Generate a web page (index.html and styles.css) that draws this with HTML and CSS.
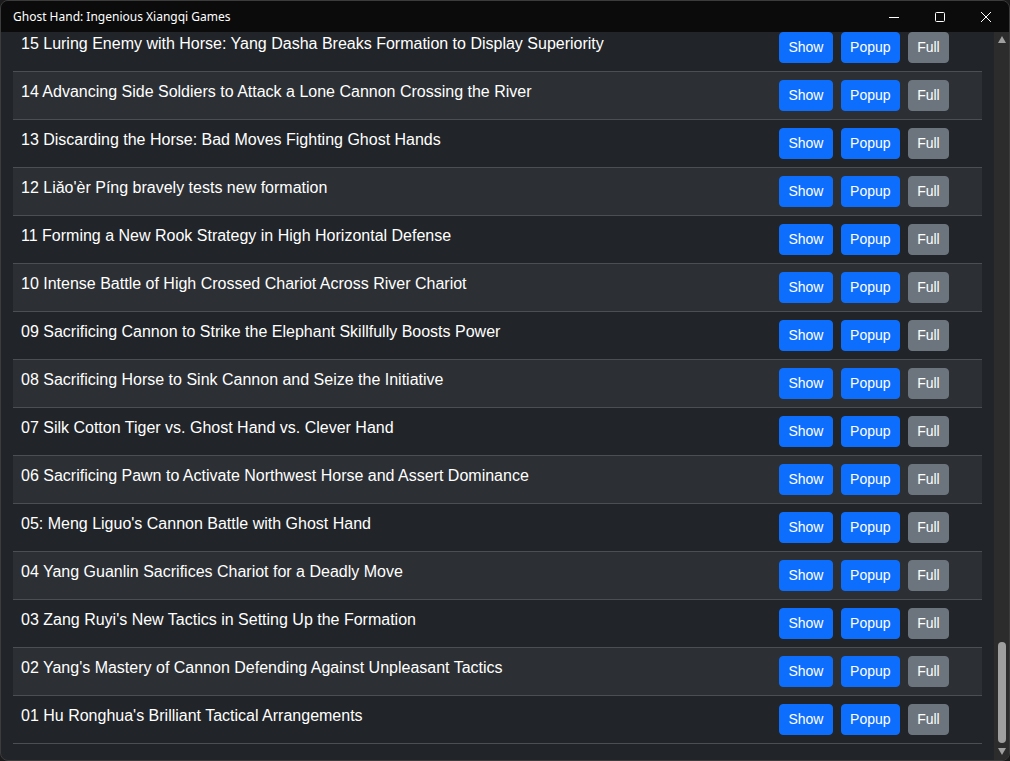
FILE: index.html
```html
<!DOCTYPE html>
<html>
<head>
<meta charset="utf-8">
<title>Ghost Hand: Ingenious Xiangqi Games</title>
<link rel="stylesheet" href="styles.css">
</head>
<body>
<div class="window">
  <div class="titlebar">
    <span class="title">Ghost Hand: Ingenious Xiangqi Games</span>
    <div class="controls">
      <div class="ctl"><svg width="12" height="12" viewBox="0 0 12 12"><path d="M1 6.5H11" stroke="#fff" stroke-width="1"/></svg></div>
      <div class="ctl"><svg width="12" height="12" viewBox="0 0 12 12"><rect x="1.5" y="1.5" width="9" height="9" rx="1" fill="none" stroke="#fff" stroke-width="1"/></svg></div>
      <div class="ctl"><svg width="12" height="12" viewBox="0 0 12 12"><path d="M1 1L11 11M11 1L1 11" stroke="#fff" stroke-width="1"/></svg></div>
    </div>
  </div>
  <div class="body">
    <div class="content">
      <div class="list">
        <div class="row"><div class="name">15 Luring Enemy with Horse: Yang Dasha Breaks Formation to Display Superiority</div><div class="actions"><button class="btn primary">Show</button><button class="btn primary">Popup</button><button class="btn secondary">Full</button></div></div>
        <div class="row striped"><div class="name">14 Advancing Side Soldiers to Attack a Lone Cannon Crossing the River</div><div class="actions"><button class="btn primary">Show</button><button class="btn primary">Popup</button><button class="btn secondary">Full</button></div></div>
        <div class="row"><div class="name">13 Discarding the Horse: Bad Moves Fighting Ghost Hands</div><div class="actions"><button class="btn primary">Show</button><button class="btn primary">Popup</button><button class="btn secondary">Full</button></div></div>
        <div class="row striped"><div class="name">12 Liǎo'èr Píng bravely tests new formation</div><div class="actions"><button class="btn primary">Show</button><button class="btn primary">Popup</button><button class="btn secondary">Full</button></div></div>
        <div class="row"><div class="name">11 Forming a New Rook Strategy in High Horizontal Defense</div><div class="actions"><button class="btn primary">Show</button><button class="btn primary">Popup</button><button class="btn secondary">Full</button></div></div>
        <div class="row striped"><div class="name">10 Intense Battle of High Crossed Chariot Across River Chariot</div><div class="actions"><button class="btn primary">Show</button><button class="btn primary">Popup</button><button class="btn secondary">Full</button></div></div>
        <div class="row"><div class="name">09 Sacrificing Cannon to Strike the Elephant Skillfully Boosts Power</div><div class="actions"><button class="btn primary">Show</button><button class="btn primary">Popup</button><button class="btn secondary">Full</button></div></div>
        <div class="row striped"><div class="name">08 Sacrificing Horse to Sink Cannon and Seize the Initiative</div><div class="actions"><button class="btn primary">Show</button><button class="btn primary">Popup</button><button class="btn secondary">Full</button></div></div>
        <div class="row"><div class="name">07 Silk Cotton Tiger vs. Ghost Hand vs. Clever Hand</div><div class="actions"><button class="btn primary">Show</button><button class="btn primary">Popup</button><button class="btn secondary">Full</button></div></div>
        <div class="row striped"><div class="name">06 Sacrificing Pawn to Activate Northwest Horse and Assert Dominance</div><div class="actions"><button class="btn primary">Show</button><button class="btn primary">Popup</button><button class="btn secondary">Full</button></div></div>
        <div class="row"><div class="name">05: Meng Liguo's Cannon Battle with Ghost Hand</div><div class="actions"><button class="btn primary">Show</button><button class="btn primary">Popup</button><button class="btn secondary">Full</button></div></div>
        <div class="row striped"><div class="name">04 Yang Guanlin Sacrifices Chariot for a Deadly Move</div><div class="actions"><button class="btn primary">Show</button><button class="btn primary">Popup</button><button class="btn secondary">Full</button></div></div>
        <div class="row"><div class="name">03 Zang Ruyi's New Tactics in Setting Up the Formation</div><div class="actions"><button class="btn primary">Show</button><button class="btn primary">Popup</button><button class="btn secondary">Full</button></div></div>
        <div class="row striped"><div class="name">02 Yang's Mastery of Cannon Defending Against Unpleasant Tactics</div><div class="actions"><button class="btn primary">Show</button><button class="btn primary">Popup</button><button class="btn secondary">Full</button></div></div>
        <div class="row"><div class="name">01 Hu Ronghua's Brilliant Tactical Arrangements</div><div class="actions"><button class="btn primary">Show</button><button class="btn primary">Popup</button><button class="btn secondary">Full</button></div></div>
      </div>
    </div>
    <div class="scrollbar">
      <div class="arrow up"></div>
      <div class="track"><div class="thumb"></div></div>
      <div class="arrow down"></div>
    </div>
  </div>
</div>
</body>
</html>
```

FILE: styles.css
```css
html, body {
  margin: 0;
  padding: 0;
  background: #1b1b1b;
}
body {
  width: 1010px;
  height: 761px;
  overflow: hidden;
}
.window {
  box-sizing: border-box;
  width: 1010px;
  height: 761px;
  border: 1px solid #3c3c3c;
  border-radius: 8px;
  overflow: hidden;
  background: #212529;
  display: flex;
  flex-direction: column;
}
.titlebar {
  height: 31px;
  flex: none;
  background: #0b0b0b;
  display: flex;
  align-items: center;
}
.title {
  flex: 1;
  padding-left: 12px;
  font-family: "Noto Sans", "Segoe UI", sans-serif;
  font-size: 12px;
  color: #ffffff;
  line-height: 16px;
}
.controls {
  display: flex;
  height: 100%;
}
.ctl {
  width: 46px;
  height: 100%;
  display: flex;
  align-items: center;
  justify-content: center;
}
.body {
  flex: 1;
  display: flex;
  min-height: 0;
}
.content {
  flex: 1;
  overflow: hidden;
  padding: 0 12px 0 12px;
}
.list {
  margin-top: -8px;
}
.row {
  display: flex;
  align-items: flex-start;
  border-bottom: 1px solid #4a4f54;
  background: #212529;
}
.row.striped {
  background: #2c3034;
}
.name {
  flex: 1;
  padding: 8px;
  font-family: "Liberation Sans", Arial, sans-serif;
  font-size: 16px;
  line-height: 24px;
  color: #ffffff;
  white-space: nowrap;
}
.actions {
  display: flex;
  gap: 8px;
  padding: 8px 33px 8px 8px;
}
.btn {
  font-family: "Liberation Sans", Arial, sans-serif;
  font-size: 14px;
  line-height: 21px;
  padding: 4px 8.3px;
  border-radius: 4px;
  color: #ffffff;
  cursor: pointer;
  margin: 0;
}
.btn.primary {
  background: #0d6efd;
  border: 1px solid #0d6efd;
}
.btn.secondary {
  background: #6c757d;
  border: 1px solid #6c757d;
}
.scrollbar {
  width: 15px;
  flex: none;
  background: #2c2c2c;
  display: flex;
  flex-direction: column;
  align-items: center;
}
.arrow {
  width: 0;
  height: 0;
  flex: none;
}
.arrow.up {
  margin-top: 4px;
  border-left: 4.5px solid transparent;
  border-right: 4.5px solid transparent;
  border-bottom: 7px solid #9f9f9f;
}
.arrow.down {
  margin-bottom: 5px;
  border-left: 4.5px solid transparent;
  border-right: 4.5px solid transparent;
  border-top: 7px solid #9f9f9f;
}
.track {
  flex: 1;
  width: 100%;
  display: flex;
  flex-direction: column;
  justify-content: flex-end;
  align-items: center;
  padding-bottom: 5px;
}
.thumb {
  width: 8px;
  height: 101px;
  border-radius: 4px;
  background: #9f9f9f;
}
```
